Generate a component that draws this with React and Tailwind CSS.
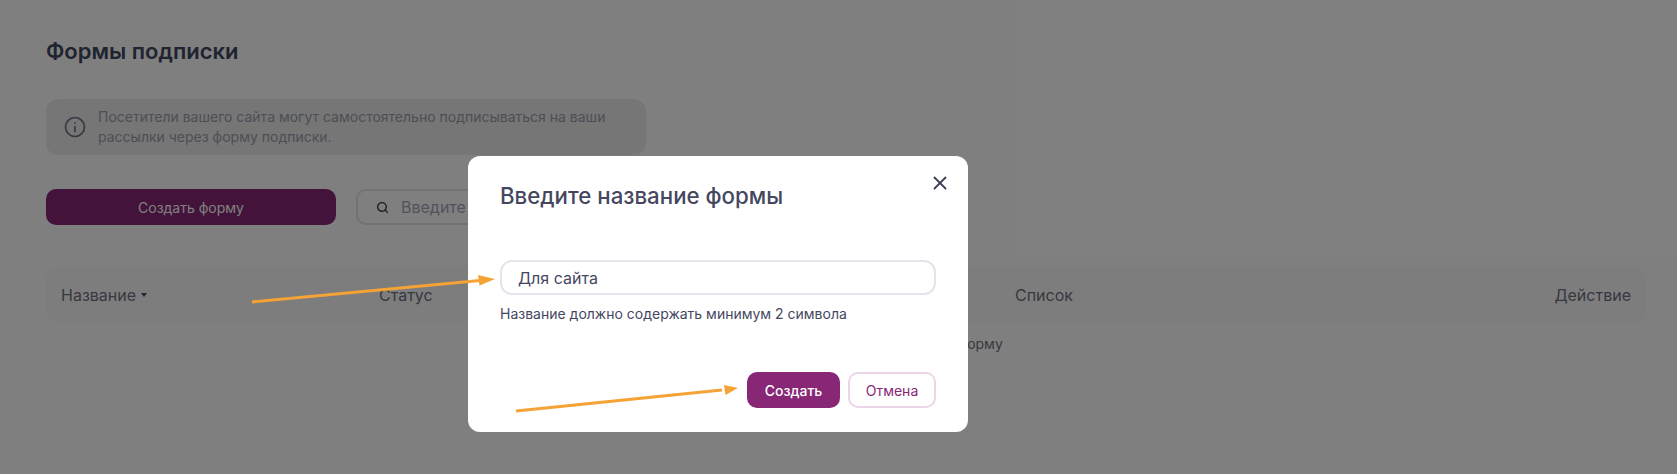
import React from "react";
import { Search, X } from "lucide-react";

export default function App() {
  return (
    <div className="relative h-[474px] w-full overflow-hidden bg-white font-['Inter','Noto_Sans',sans-serif] text-[#2d3148]">
      <div className="pl-[46px] pr-[31px] pt-[38px]">
        <h1 className="h-[26px] text-[22px] leading-[26px] font-semibold text-[#3e4860]">Формы подписки</h1>
        <div className="mt-[35px] flex h-[56px] w-[600px] items-center rounded-[12px] bg-[#ececee] pl-[18px] pr-4">
          <svg width="22" height="22" viewBox="0 0 22 22" fill="none" stroke="#6f7185" strokeWidth="1.7" strokeLinecap="round" className="shrink-0">
            <circle cx="11" cy="11" r="9.5" />
            <path d="M11 10.5v5M11 6.8v.2" />
          </svg>
          <p className="ml-[12px] text-[14px] leading-[20px] text-[#9a9cab]">
            Посетители вашего сайта могут самостоятельно подписываться на ваши рассылки через форму подписки.
          </p>
        </div>
        <div className="mt-[34px] flex h-[36px] gap-[20px]">
          <button className="w-[290px] rounded-[10px] bg-[#862776] text-[14px] text-white">Создать форму</button>
          <div className="flex w-[400px] items-center rounded-[10px] border-2 border-[#e2e4ec] pl-[18px]">
            <Search size={13} strokeWidth={2.5} className="text-[#2d3148]" />
            <span className="ml-[12px] text-[16px] text-[#a3a5b8]">Введите имя</span>
          </div>
        </div>
        <div className="mt-[42px] grid h-[55px] grid-cols-[318px_636px_1fr_auto] items-center rounded-[10px] bg-[#fbfbfc] pl-[15px] pr-[15px] text-[16px] text-[#6f7180]">
          <div className="flex items-center gap-[5px]">
            Название
            <span className="mt-[1px] h-0 w-0 border-x-[3.5px] border-t-[4px] border-x-transparent border-t-[#4a4d60]"></span>
          </div>
          <div>Статус</div>
          <div>Список</div>
          <div>Действие</div>
        </div>
        <div className="mt-[13px] pr-[24px] text-center text-[14px] leading-[17px] text-[#6f7180]">У вас пока нет ни одной формы, создайте форму</div>
      </div>

      <div className="absolute inset-0 bg-black/50"></div>

      <div className="absolute left-[468px] top-[156px] flex h-[276px] w-[500px] flex-col rounded-[12px] bg-white px-[32px]">
        <button className="absolute right-[17px] top-[16px] text-[#3c3f58]">
          <X size={22} strokeWidth={2} />
        </button>
        <h2 className="mt-[25px] h-[30px] text-[22.25px] leading-[30px] font-medium text-[#45475f]">Введите название формы</h2>
        <input
          readOnly
          value="Для сайта"
          className="mt-[49px] h-[35px] w-full rounded-[12px] border-2 border-[#e2e5ec] pl-[16px] text-[16px] text-[#45475f] outline-none"
        />
        <p className="mt-[10px] text-[14px] leading-[17px] text-[#45475f]">Название должно содержать минимум 2 символа</p>
        <div className="mt-[50px] flex justify-end gap-[8px]">
          <button className="h-[36px] w-[93px] rounded-[10px] bg-[#882776] text-[14px] font-medium text-white">Создать</button>
          <button className="h-[36px] w-[88px] rounded-[10px] border-2 border-[#ebd6e8] text-[14px] text-[#882776]">Отмена</button>
        </div>
      </div>

      <svg className="absolute inset-0" width="1677" height="474" fill="none">
        <path d="M252 302L480 280.5" stroke="#f5a236" strokeWidth="3" />
        <path d="M495 279L478 275L479.5 285.5Z" fill="#f5a236" />
        <path d="M516 411L722 390" stroke="#f5a236" strokeWidth="3" />
        <path d="M738 388L724 385L725.5 395Z" fill="#f5a236" />
      </svg>
    </div>
  );
}
